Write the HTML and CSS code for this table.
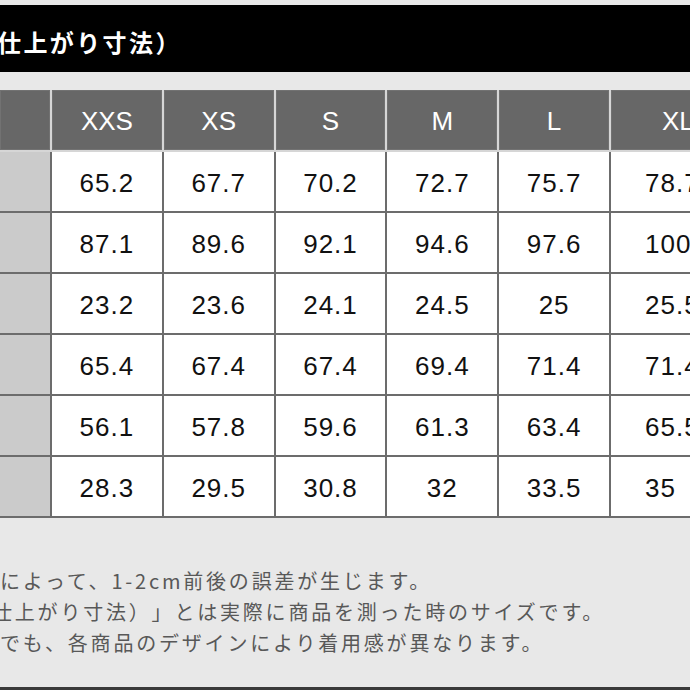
FILE: index.html
```html
<!DOCTYPE html>
<html lang="ja">
<head>
<meta charset="utf-8">
<title>サイズ表</title>
<link rel="stylesheet" href="styles.css">
</head>
<body>
<div class="page">
  <div class="strip"></div>
  <div class="title-bar"><span class="title">仕上がり寸法）</span></div>
  <div class="size-table">
    <div class="head-row">
      <div class="hcell"></div>
      <div class="hcell">XXS</div>
      <div class="hcell">XS</div>
      <div class="hcell">S</div>
      <div class="hcell">M</div>
      <div class="hcell">L</div>
      <div class="hcell last">XL</div>
    </div>
    <div class="body-grid">
      <div class="label"></div><div class="cell">65.2</div><div class="cell">67.7</div><div class="cell">70.2</div><div class="cell">72.7</div><div class="cell">75.7</div><div class="cell">78.7</div>
      <div class="label"></div><div class="cell">87.1</div><div class="cell">89.6</div><div class="cell">92.1</div><div class="cell">94.6</div><div class="cell">97.6</div><div class="cell">100.6</div>
      <div class="label"></div><div class="cell">23.2</div><div class="cell">23.6</div><div class="cell">24.1</div><div class="cell">24.5</div><div class="cell">25</div><div class="cell">25.5</div>
      <div class="label"></div><div class="cell">65.4</div><div class="cell">67.4</div><div class="cell">67.4</div><div class="cell">69.4</div><div class="cell">71.4</div><div class="cell">71.4</div>
      <div class="label"></div><div class="cell">56.1</div><div class="cell">57.8</div><div class="cell">59.6</div><div class="cell">61.3</div><div class="cell">63.4</div><div class="cell">65.5</div>
      <div class="label"></div><div class="cell">28.3</div><div class="cell">29.5</div><div class="cell">30.8</div><div class="cell">32</div><div class="cell">33.5</div><div class="cell">35</div>
    </div>
  </div>
  <div class="notes">
    <p class="note">によって、1-2cm前後の誤差が生じます。</p>
    <p class="note shift">仕上がり寸法）」とは実際に商品を測った時のサイズです。</p>
    <p class="note">でも、各商品のデザインにより着用感が異なります。</p>
  </div>
  <div class="bottom-bar"></div>
</div>
</body>
</html>
```
FILE: styles.css
```css
html, body {
  margin: 0;
  padding: 0;
}
body {
  background: #e8e8e8;
  width: 690px;
  height: 690px;
  overflow: hidden;
}
.page {
  width: 690px;
  height: 690px;
  overflow: hidden;
  display: flex;
  flex-direction: column;
}
.strip {
  height: 5px;
  flex: none;
}
.title-bar {
  height: 67px;
  flex: none;
  background: #000;
  display: flex;
  align-items: center;
  padding-top: 5px;
  box-sizing: border-box;
}
.title {
  color: #fff;
  font-family: "Noto Sans CJK JP", sans-serif;
  font-weight: 700;
  font-size: 24px;
  letter-spacing: 2.4px;
  margin-left: -3px;
  white-space: nowrap;
  text-spacing-trim: space-all;
}
.size-table {
  margin-top: 18px;
  width: 800px;
  flex: none;
}
.head-row,
.body-grid {
  display: grid;
  grid-template-columns: 50px repeat(5, 109.8px) 150px;
  column-gap: 2px;
}
.head-row {
  background: #d6d6d6;
  padding-bottom: 2px;
}
.hcell {
  height: 60px;
  background: #676767;
  box-shadow: inset 0 0 0 1px #727272;
  color: #fff;
  font-family: "Liberation Sans", Arial, sans-serif;
  font-size: 26px;
  display: flex;
  align-items: center;
  justify-content: center;
  padding-top: 2px;
  box-sizing: border-box;
}
.hcell.last {
  justify-content: flex-start;
  padding-left: 51px;
}
.body-grid {
  background: #6c6c6c;
  row-gap: 2px;
  padding-bottom: 2px;
  grid-auto-rows: 59px;
}
.label {
  background: #cbcbcb;
}
.cell {
  background: #fff;
  color: #111;
  font-family: "Liberation Sans", Arial, sans-serif;
  font-size: 26px;
  letter-spacing: 1px;
  display: flex;
  align-items: center;
  justify-content: center;
  padding-top: 3px;
  box-sizing: border-box;
}
.body-grid .cell:nth-child(7n) {
  justify-content: flex-start;
  padding-left: 34px;
}
.notes {
  margin-top: 47px;
  flex: none;
}
.note {
  margin: 0;
  height: 31px;
  line-height: 31px;
  font-family: "Noto Sans CJK JP", sans-serif;
  font-size: 20px;
  letter-spacing: 2.8px;
  color: #585858;
  white-space: nowrap;
  text-spacing-trim: space-all;
}
.note.shift {
  margin-left: -8px;
}
.bottom-bar {
  margin-top: auto;
  height: 3px;
  background: #3a3a3a;
  flex: none;
}
```
